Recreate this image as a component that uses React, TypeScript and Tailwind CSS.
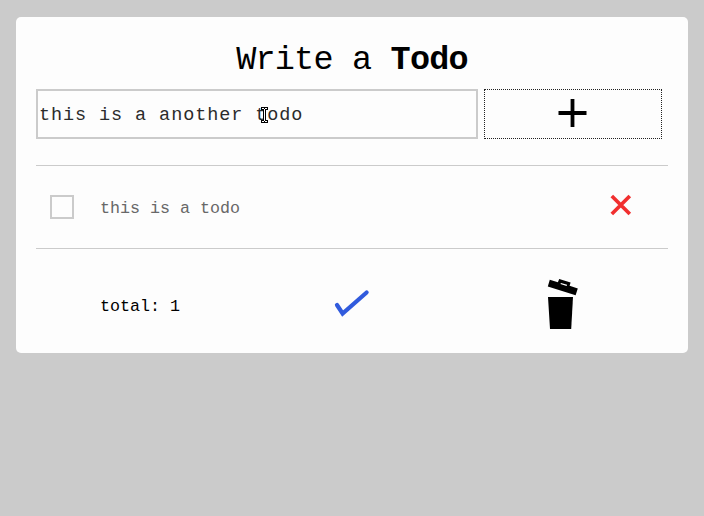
import React, { useState } from "react";

function PlusIcon() {
  return (
    <svg width="30" height="30" viewBox="0 0 30 30" aria-hidden="true">
      <path d="M14.5 1V29M0.5 15H28.5" stroke="#000" strokeWidth="3.8" fill="none" />
    </svg>
  );
}

function CrossIcon() {
  return (
    <svg width="24" height="24" viewBox="0 0 24 24" aria-hidden="true">
      <path d="M2.8 3L20.8 21M20.8 3L2.8 21" stroke="#f12f2f" strokeWidth="3.7" strokeLinecap="butt" />
    </svg>
  );
}

function CheckIcon() {
  return (
    <svg width="36" height="30" viewBox="0 0 36 30" aria-hidden="true">
      <path d="M3 17L8.6 25.5L32.6 4.5" stroke="#315bdd" strokeWidth="4.2" strokeLinecap="round" strokeLinejoin="miter" fill="none" />
    </svg>
  );
}

function TrashIcon() {
  return (
    <svg width="32" height="50" viewBox="0 0 32 50" aria-hidden="true">
      <path d="M1 18H26L24.2 50H3Z" fill="#000" />
      <path d="M2.8 0.8L10.9 3.2L12.2 0L23.6 3.4L22.6 6.8L30.8 9.6L28.6 16.2L0.8 7.5ZM14 4L13.4 5L19.6 6.9L20.1 5.8Z" fill="#000" fillRule="evenodd" />
    </svg>
  );
}

function TextCursor() {
  return (
    <svg className="pointer-events-none absolute left-[223px] top-[15px]" width="8" height="18" viewBox="0 0 8 18" shapeRendering="crispEdges" aria-hidden="true">
      <path d="M0 1H7V4H5V14H7V17H0V14H2V4H0Z" fill="#000" />
      <path d="M1 2H3V3H1ZM4 2H6V3H4ZM3 3H4V15H3ZM1 15H3V16H1ZM4 15H6V16H4Z" fill="#fff" />
    </svg>
  );
}

export default function App() {
  const [value, setValue] = useState("this is a another todo");
  return (
    <div className="min-h-screen bg-[#cbcbcb] px-4 pt-[17px] font-['Liberation_Mono',monospace] text-black">
      <main className="h-[336px] rounded-[5px] bg-[#fdfdfd] px-5 pt-5">
        <h1 className="h-[52px] text-center text-[33.5px] leading-[47px] tracking-[-0.8px]">
          Write a <b>Todo</b>
        </h1>
        <div className="flex h-[50px] gap-1.5">
          <div className="relative w-[442px] border-2 border-[#cbcbcb]">
            <input
              aria-label="New todo"
              className="h-full w-full bg-transparent px-px pt-0.5 text-[18.5px] tracking-[0.91px] text-[#2b2b2b] outline-none"
              value={value}
              onChange={(e) => setValue(e.target.value)}
            />
            <TextCursor />
          </div>
          <button aria-label="Add todo" className="flex w-[178px] items-center justify-center border border-dotted border-[#222] pb-[2px]">
            <PlusIcon />
          </button>
        </div>
        <div className="mt-[26px] flex h-[84px] items-center border-y border-[#cbcbcb] pl-3.5 pr-[35px]">
          <button aria-label="Toggle todo" className="size-6 border-2 border-[#cbcbcb]" />
          <span className="ml-[26px] flex-1 pt-0.5 text-[16.67px] text-[#686868]">this is a todo</span>
          <button aria-label="Delete todo" className="pb-1">
            <CrossIcon />
          </button>
        </div>
        <footer className="grid h-[104px] grid-cols-3 items-start pt-[30px]">
          <span className="pl-16 pt-4 text-[16.67px] leading-6">total: 1</span>
          <button aria-label="Complete all" className="mt-[9px] justify-self-center">
            <CheckIcon />
          </button>
          <button aria-label="Clear all" className="justify-self-center">
            <TrashIcon />
          </button>
        </footer>
      </main>
    </div>
  );
}
